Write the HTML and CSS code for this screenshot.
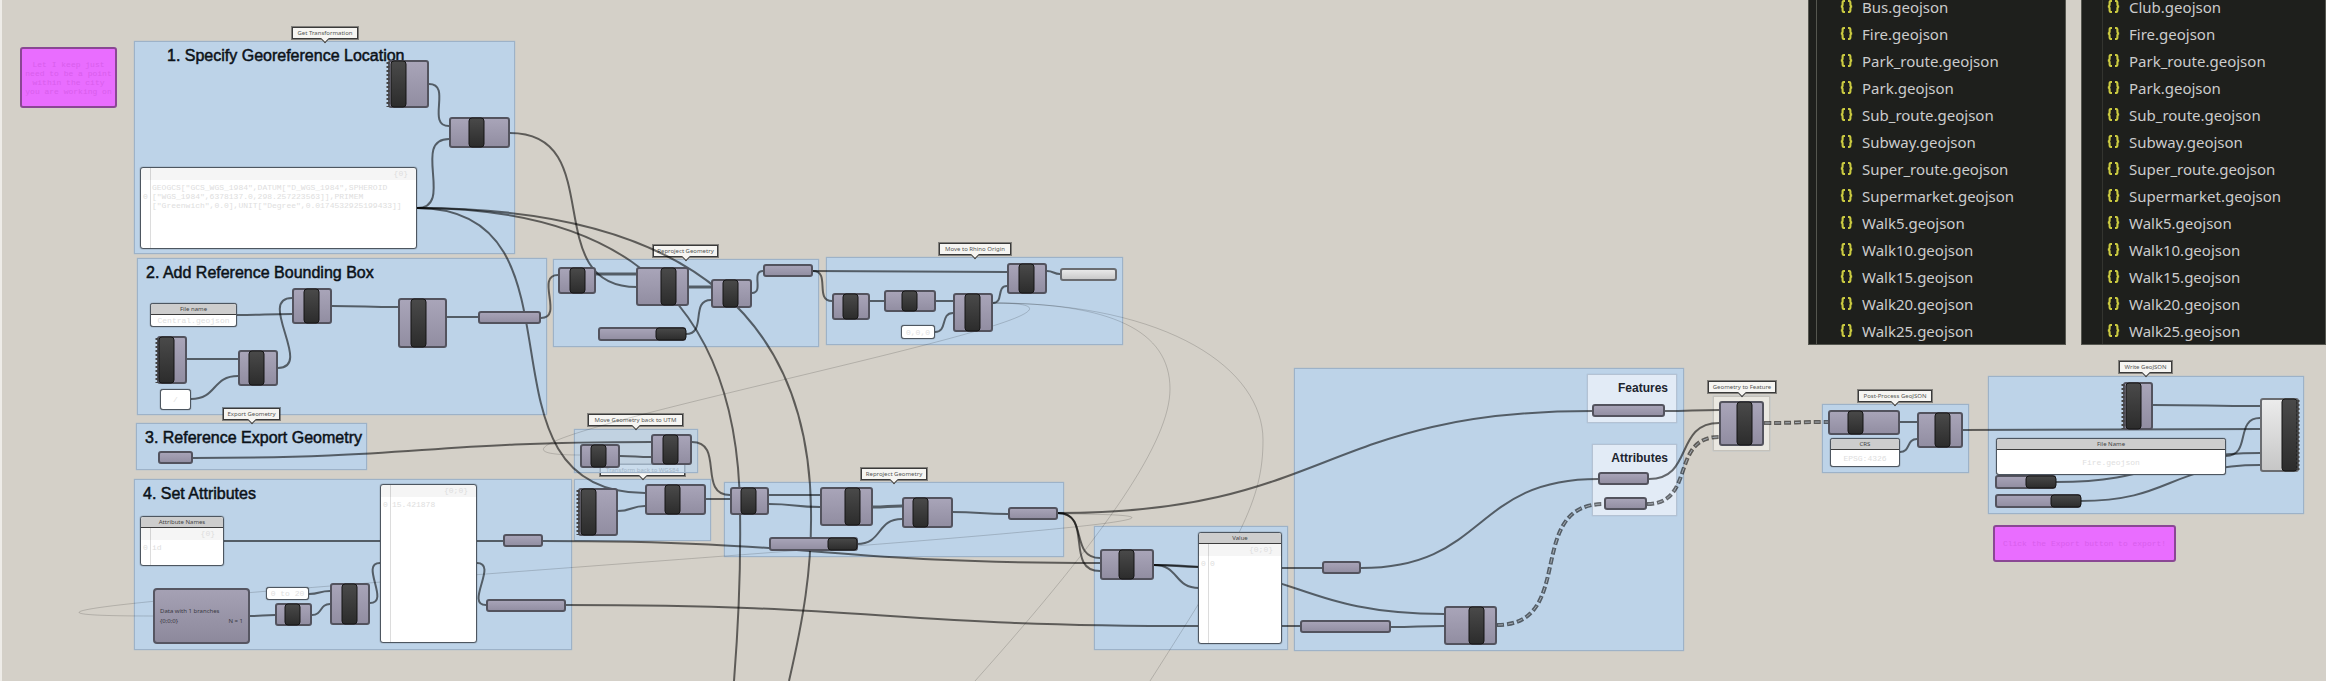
FILE: index.html
```html
<!DOCTYPE html>
<html lang="en">
<head>
<meta charset="utf-8">
<title>GeoJSON export definition</title>
<link rel="stylesheet" href="styles.css">
</head>
<body>
<main class="canvas">

  <section class="group g-location"><h2 class="title">1. Specify Georeference Location</h2></section>
  <section class="group g-bounds"><h2 class="title">2. Add Reference Bounding Box</h2></section>
  <section class="group g-export"><h2 class="title">3. Reference Export Geometry</h2></section>
  <section class="group g-attrs"><h2 class="title">4. Set Attributes</h2></section>
  <section class="group g-reproject"></section>
  <section class="group g-origin"></section>
  <section class="group g-wgs"></section>
  <div class="tag t-wgs">Transform back to WGS84</div>
  <section class="group g-utm"></section>
  <section class="group g-reproject-b"></section>
  <section class="group g-value"></section>
  <section class="group g-collect"></section>
  <section class="group pale g-features"><h3 class="subtitle">Features</h3></section>
  <section class="group pale g-attributes"><h3 class="subtitle">Attributes</h3></section>
  <section class="group cream g-feature"></section>
  <section class="group g-post"></section>
  <section class="group g-write"></section>

  <div class="tag t-transformation">Get Transformation</div>
  <div class="tag t-export">Export Geometry</div>
  <div class="tag t-reproject">Reproject Geometry</div>
  <div class="tag t-origin">Move to Rhino Origin</div>
  <div class="tag t-utm">Move Geometry back to UTM</div>
  <div class="tag t-reproject-b">Reproject Geometry</div>
  <div class="tag t-feature">Geometry to Feature</div>
  <div class="tag t-post">Post-Process GeoJSON</div>
  <div class="tag t-write">Write GeoJSON</div>

  <svg class="graph" aria-hidden="true">
    <defs>
      <linearGradient id="body" x1="0" y1="0" x2="0" y2="1"><stop offset="0" stop-color="#a9a5b9"/><stop offset="1" stop-color="#918da1"/></linearGradient>
      <linearGradient id="light" x1="0" y1="0" x2="0" y2="1"><stop offset="0" stop-color="#ececec"/><stop offset="1" stop-color="#c6c6c6"/></linearGradient>
      <linearGradient id="core" x1="0" y1="0" x2="0" y2="1"><stop offset="0" stop-color="#4a4a4a"/><stop offset="1" stop-color="#2c2c2c"/></linearGradient>
    </defs>
    <g id="wires"></g>
    <g id="nodes"></g>
  </svg>

  <div class="note n-hint">Let I keep just<br>need to be a point<br>within the city<br>you are working on</div>
  <div class="note n-click">Click the Export button to export!</div>

  <article class="panel indexed p-crs-wkt"><div class="path">{0}</div><div class="row"><span class="idx">0</span><span>GEOGCS["GCS_WGS_1984",DATUM["D_WGS_1984",SPHEROID<br>["WGS_1984",6378137.0,298.257223563]],PRIMEM<br>["Greenwich",0.0],UNIT["Degree",0.0174532925199433]]</span></div></article>
  <article class="panel p-file"><h4 class="head">File name</h4><div class="value">Central.geojson</div></article>
  <article class="panel p-slash"><div class="value">/</div></article>
  <article class="panel indexed p-names"><h4 class="head">Attribute Names</h4><div class="path">{0}</div><div class="row"><span class="idx">0</span><span>id</span></div></article>
  <article class="panel indexed p-list"><div class="path">{0;0}</div><div class="row"><span class="idx">0</span><span>15.421878</span></div></article>
  <article class="panel p-range"><div class="value">0 to 20</div></article>
  <article class="panel p-zero"><div class="value">0,0,0</div></article>
  <article class="panel indexed p-value"><h4 class="head">Value</h4><div class="path">{0;0}</div><div class="row"><span class="idx">0</span><span>0</span></div></article>
  <article class="panel p-crs"><h4 class="head">CRS</h4><div class="value">EPSG:4326</div></article>
  <article class="panel p-out"><h4 class="head">File Name</h4><div class="value">Fire.geojson</div></article>
  <article class="data"><div>Data with 1 branches</div><div class="counts"><span>{0;0;0}</span><span>N = 1</span></div></article>

  <svg class="defs" aria-hidden="true"><symbol id="json" viewBox="0 0 13 13"><path d="M5 1H4Q2.6 1 2.6 2.4V4.6Q2.6 6.5 .8 6.5Q2.6 6.5 2.6 8.4V10.6Q2.6 12 4 12H5M8 1H9Q10.400 1 10.400 2.400V4.600Q10.400 6.500 12.200 6.500Q10.400 6.500 10.400 8.400V10.600Q10.400 12 9 12H8" fill="none" stroke="#cbcb41" stroke-width="2.1"/></symbol></svg>
  <nav class="files files-left" aria-label="Exported files"><ul class="list" data-first="Bus"></ul></nav>
  <nav class="files files-right" aria-label="Source files"><ul class="list" data-first="Club"></ul></nav>
</main>
<script src="graph.js"></script>
</body>
</html>
```
FILE: styles.css
```css
* { box-sizing: border-box; }
body { margin: 0; background: #d4d0c8; font-family: "Liberation Sans", Arial, sans-serif; }
.canvas { position: relative; min-height: 100vh; overflow: hidden; border-left: 2px solid #eeece8; }
.canvas > * { position: absolute; margin-left: -2px; }
.graph { left: 0; top: 0; width: 100%; height: 100%; overflow: visible; }
.defs { width: 0; height: 0; }

/* groups */
.group { background: rgba(187, 211, 233, .96); border: 1px solid #9db2c8; box-shadow: 0 0 1px #9db2c8; }
.pale { background: #e2ebf6; border-color: #b4c2d3; }
.cream { background: #eae8e1; border-color: #c4c1ba; }
.title { margin: 0; padding: 5px 8px; font-size: 16px; line-height: 18px; font-weight: 400; color: #0c1218; -webkit-text-stroke: .5px #0c1218; white-space: nowrap; }
.subtitle { margin: 0; padding: 5px 8px; font-size: 12px; line-height: 16px; color: #1c242e; text-align: right; }
.g-location { left: 134px; top: 41px; width: 381px; height: 213px; }
.g-location .title { padding-left: 32px; }
.g-bounds { left: 137px; top: 258px; width: 410px; height: 157px; }
.g-export { left: 136px; top: 423px; width: 231px; height: 47px; }
.g-attrs { left: 134px; top: 479px; width: 438px; height: 171px; }
.g-reproject { left: 553px; top: 259px; width: 266px; height: 88px; }
.g-origin { left: 826px; top: 257px; width: 297px; height: 88px; }
.g-utm { left: 574px; top: 429px; width: 124px; height: 44px; background: rgba(187, 211, 233, .75); }
.g-wgs { left: 574px; top: 479px; width: 137px; height: 62px; }
.g-reproject-b { left: 724px; top: 482px; width: 340px; height: 75px; }
.g-value { left: 1094px; top: 526px; width: 194px; height: 124px; }
.g-collect { left: 1294px; top: 368px; width: 390px; height: 283px; }
.g-features { left: 1587px; top: 374px; width: 90px; height: 49px; }
.g-attributes { left: 1592px; top: 444px; width: 85px; height: 72px; }
.g-feature { left: 1713px; top: 396px; width: 57px; height: 55px; }
.g-post { left: 1822px; top: 404px; width: 147px; height: 69px; }
.g-write { left: 1988px; top: 376px; width: 316px; height: 138px; }

/* callout tags above groups */
.tag { height: 12px; border: 1px solid #3a3a3a; box-shadow: 0 0 0 1px rgba(30, 30, 30, .45); background: #f6f5f2; color: #555; font: 6px/10px "Noto Sans", sans-serif; text-align: center; white-space: nowrap; }
.tag::after { content: ""; position: absolute; left: 50%; top: 8px; width: 5px; height: 5px; margin-left: -3px; background: #f6f5f2; border: solid #3a3a3a; border-width: 0 1px 1px 0; transform: rotate(45deg); }
.t-transformation { left: 292px; top: 27px; width: 66px; }
.t-export { left: 223px; top: 408px; width: 57px; }
.t-reproject { left: 653px; top: 245px; width: 65px; }
.t-origin { left: 939px; top: 243px; width: 72px; }
.t-utm { left: 588px; top: 414px; width: 95px; }
.t-wgs { left: 600px; top: 464px; width: 85px; }
.t-reproject-b { left: 861px; top: 468px; width: 66px; }
.t-feature { left: 1708px; top: 381px; width: 68px; }
.t-post { left: 1858px; top: 390px; width: 74px; }
.t-write { left: 2119px; top: 361px; width: 53px; }

/* panels */
.panel { display: flex; flex-direction: column; overflow: hidden; background: #fff; border: 1px solid #4d5660; border-radius: 3px; box-shadow: 0 0 1px #222; color: #dedede; font: 8px/9px "Liberation Mono", monospace; white-space: nowrap; }
.indexed { background: linear-gradient(90deg, #fff 9px, #dcdcdc 9px, #dcdcdc 10px, #fff 10px); }
.head { margin: 0; height: 11px; background: #cdcdcd; border-bottom: 1px solid #3c3c3c; color: #444; font: 6px/10px "Noto Sans", sans-serif; text-align: center; flex: none; }
.path { height: 12px; padding: 1px 8px; text-align: right; background: rgba(0, 0, 0, .04); }
.row { display: flex; align-items: center; padding-top: 3px; }
.idx { flex: none; width: 11px; padding-left: 2px; }
.value { flex: 1; display: flex; align-items: center; justify-content: center; }
.p-crs-wkt { left: 140px; top: 167px; width: 277px; height: 82px; }
.p-file { left: 150px; top: 303px; width: 87px; height: 24px; }
.p-slash { left: 160px; top: 389px; width: 31px; height: 21px; }
.p-names { left: 140px; top: 516px; width: 84px; height: 50px; }
.p-list { left: 380px; top: 484px; width: 97px; height: 159px; }
.p-range { left: 266px; top: 587px; width: 43px; height: 13px; }
.p-zero { left: 901px; top: 325px; width: 34px; height: 14px; }
.p-value { left: 1198px; top: 532px; width: 84px; height: 112px; }
.p-crs { left: 1830px; top: 438px; width: 70px; height: 29px; }
.p-out { left: 1996px; top: 438px; width: 230px; height: 37px; }
.note { display: flex; align-items: center; justify-content: center; border: 2px solid #8a4794; border-radius: 3px; background: #e96dff; color: #d85dec; font: 8px/9px "Liberation Mono", monospace; text-align: center; white-space: nowrap; }
.n-hint { left: 20px; top: 47px; width: 97px; height: 61px; }
.n-click { left: 1993px; top: 525px; width: 183px; height: 37px; }
.data { left: 153px; top: 588px; width: 97px; height: 56px; padding: 16px 5px; border: 2px solid #565662; border-radius: 4px; background: linear-gradient(#a5a1b4, #8d899c); color: #3a3944; font: 6px/10px "Noto Sans", sans-serif; white-space: nowrap; }
.counts { display: flex; justify-content: space-between; }

/* graph parts */
.wire { fill: none; stroke: #000; stroke-opacity: .56; stroke-width: 2; }
.thick { stroke-width: 3; }
.faint { stroke-opacity: .16; stroke-width: 1; }
.tree { stroke-width: 4; stroke-dasharray: 7 3; }
.tree-core { stroke: #a6adb5; stroke-opacity: 1; stroke-width: 1; stroke-dasharray: 5 5; stroke-dashoffset: -1; }
.shell { fill: url(#body); stroke: #53535e; stroke-width: 2; }
.shell.pearl { fill: url(#light); stroke: #6a6c70; }
.core { fill: url(#core); stroke: #151515; stroke-width: 1; }
.teeth { fill: none; stroke: #444; stroke-width: 3; stroke-dasharray: 2 2; }

/* file lists */
.files { top: 0; height: 345px; overflow: hidden; background: #1e1f1c; border: solid #55564f; border-width: 0 1px 1px; font-family: "Noto Sans", sans-serif; }
.files-left { left: 1808px; width: 258px; }
.files-right { left: 2081px; right: 0; }
.list { margin: -7px 0 0 7px; padding: 0 0 1px; list-style: none; border-left: 1px solid #55564f; }
.files-right .list { margin-left: 20px; border-color: #33342f; }
.file { display: flex; align-items: center; gap: 9px; height: 27px; padding-left: 23px; color: #ccc; font-size: 15px; text-decoration: none; }
.files-right .file { padding-left: 4px; }
.icon { width: 13px; height: 13px; flex: none; }
```
FILE: graph.js
```js
// Components: x, y, width, height, then core x and core width; a last word sets the variant.
const nodes = [
  [388, 60, 41, 48, 391, 15, "teeth-left"], [449, 117, 61, 31, 469, 15],
  [292, 288, 40, 36, 304, 15], [157, 336, 30, 48, 159, 15, "teeth-left"], [238, 350, 40, 36, 249, 15],
  [398, 298, 49, 50, 411, 15], [478, 311, 63, 13], [158, 451, 35, 13],
  [558, 267, 38, 27, 570, 15], [636, 267, 53, 39, 661, 15], [711, 279, 41, 29, 723, 15],
  [763, 264, 50, 13], [598, 327, 88, 14, 656, 30], [832, 293, 38, 27, 843, 15],
  [884, 290, 52, 22, 902, 15], [953, 293, 40, 39, 965, 15], [1007, 263, 40, 31, 1019, 15],
  [1060, 268, 57, 13, null, 0, "pearl"],
  [580, 444, 40, 24, 591, 15], [651, 434, 41, 31, 663, 15], [578, 488, 40, 48, 581, 15, "teeth-left"],
  [645, 484, 61, 31, 665, 15], [730, 487, 39, 28, 741, 15], [820, 487, 53, 39, 845, 15],
  [902, 497, 51, 31, 913, 15], [1008, 507, 50, 13], [769, 537, 89, 14, 828, 29],
  [503, 534, 40, 13], [486, 599, 80, 13], [275, 603, 37, 23, 285, 15], [330, 583, 40, 42, 342, 15],
  [1100, 549, 54, 31, 1119, 15], [1322, 561, 39, 13], [1300, 620, 91, 13], [1444, 606, 53, 39, 1469, 15],
  [1592, 404, 73, 13], [1598, 472, 51, 13], [1604, 497, 43, 13], [1719, 401, 45, 45, 1737, 15],
  [1828, 410, 72, 25, 1848, 15], [1917, 412, 46, 36, 1935, 15], [2123, 382, 30, 48, 2126, 15, "teeth-left"],
  [2260, 398, 39, 74, 2282, 15, "pearl teeth-right"],
  [1995, 475, 61, 14, 2026, 30], [1995, 494, 86, 14, 2051, 30]
];

// Wires: output x, y, input x, y and an optional style.
const wires = [
  [429, 84, 449, 126], [417, 208, 449, 139], [510, 133, 637, 287], [417, 208, 645, 493],
  [237, 315, 292, 314], [278, 368, 292, 298], [187, 359, 238, 359], [191, 399, 238, 376],
  [332, 306, 398, 307], [447, 317, 478, 317], [541, 318, 558, 275], [193, 458, 651, 442],
  [596, 274, 637, 274, "thick"], [689, 287, 711, 287, "thick"], [752, 293, 763, 271], [686, 334, 711, 300],
  [813, 271, 1007, 272], [813, 271, 832, 301], [870, 301, 884, 301], [936, 301, 953, 301],
  [935, 332, 953, 313], [993, 303, 1007, 286], [1047, 271, 1060, 274],
  [620, 456, 651, 457], [692, 442, 730, 495], [706, 499, 730, 499], [618, 511, 645, 506],
  [769, 495, 820, 495], [769, 504, 820, 507], [873, 507, 902, 506, "thick"], [857, 544, 902, 519],
  [952, 512, 1008, 514], [543, 541, 1100, 563], [566, 605, 1199, 626], [1058, 513, 1100, 558],
  [1058, 513, 1100, 571], [1058, 513, 1592, 411], [224, 541, 380, 541], [477, 541, 503, 541],
  [250, 616, 275, 615], [309, 594, 330, 591], [312, 615, 330, 604], [370, 603, 380, 563],
  [477, 563, 486, 605], [1154, 565, 1199, 567], [1154, 565, 1199, 588], [1154, 565, 1444, 614],
  [1282, 568, 1322, 568], [1282, 626, 1300, 626], [1391, 627, 1444, 626], [1361, 568, 1598, 479],
  [1497, 625, 1604, 504, "tree"], [1665, 411, 1719, 410], [1649, 479, 1719, 423],
  [1647, 504, 1719, 437, "tree"], [1764, 423, 1828, 422, "tree"], [1900, 422, 1917, 422],
  [1900, 452, 1917, 439], [1963, 430, 2260, 429], [2153, 405, 2260, 406], [2226, 456, 2260, 418],
  [2056, 482, 2260, 453], [2080, 501, 2260, 465],
  [993, 303, 580, 455, "faint"], [1058, 514, 153, 616, "faint"]
];

// Wires that leave the visible part of the canvas.
const longWires = [
  ["M417 208C560 208 738 250 740 510C741 570 738 630 734 681", ""],
  ["M417 208C580 208 808 245 811 510C812 570 803 620 789 681", ""],
  ["M993 303C1110 303 1170 330 1170 389C1170 440 1110 530 975 681", "faint"],
  ["M993 303C1170 303 1263 370 1263 440C1263 500 1240 540 1150 681", "faint"]
];

const add = (parent, tag, attrs) => {
  const el = document.createElementNS("http://www.w3.org/2000/svg", tag);
  for (const key in attrs) el.setAttribute(key, attrs[key]);
  parent.appendChild(el);
};

const wireLayer = document.getElementById("wires");
const drawWire = (d, kind) => {
  add(wireLayer, "path", { d, class: "wire " + kind });
  if (kind === "tree") add(wireLayer, "path", { d, class: "wire tree-core" });
};
for (const [x1, y1, x2, y2, kind = ""] of wires) {
  const reach = Math.hypot(x2 - x1, y2 - y1) / 2;
  drawWire(`M${x1} ${y1}C${x1 + reach} ${y1} ${x2 - reach} ${y2} ${x2} ${y2}`, kind);
}
for (const [d, kind] of longWires) drawWire(d, kind);

const nodeLayer = document.getElementById("nodes");
for (const [x, y, width, height, coreX, coreWidth, kind = ""] of nodes) {
  add(nodeLayer, "rect", { x: x + 1, y: y + 1, width: width - 2, height: height - 2, rx: 2, class: "shell " + (kind.includes("pearl") ? "pearl" : "") });
  if (coreWidth) add(nodeLayer, "rect", { x: coreX, y: y + 1, width: coreWidth, height: height - 2, rx: 3, class: "core" });
  if (kind.includes("teeth")) {
    const edge = kind.includes("left") ? x : x + width - 1;
    add(nodeLayer, "path", { d: `M${edge} ${y + 2}V${y + height - 1}`, class: "teeth" });
  }
}

const names = ["Fire", "Park_route", "Park", "Sub_route", "Subway", "Super_route", "Supermarket", "Walk5", "Walk10", "Walk15", "Walk20", "Walk25"];
for (const list of document.querySelectorAll(".list")) {
  list.innerHTML = [list.dataset.first, ...names].map(name =>
    `<li><a class="file" href="#${name}"><svg class="icon" aria-hidden="true"><use href="#json"/></svg>${name}.geojson</a></li>`).join("");
}
```
